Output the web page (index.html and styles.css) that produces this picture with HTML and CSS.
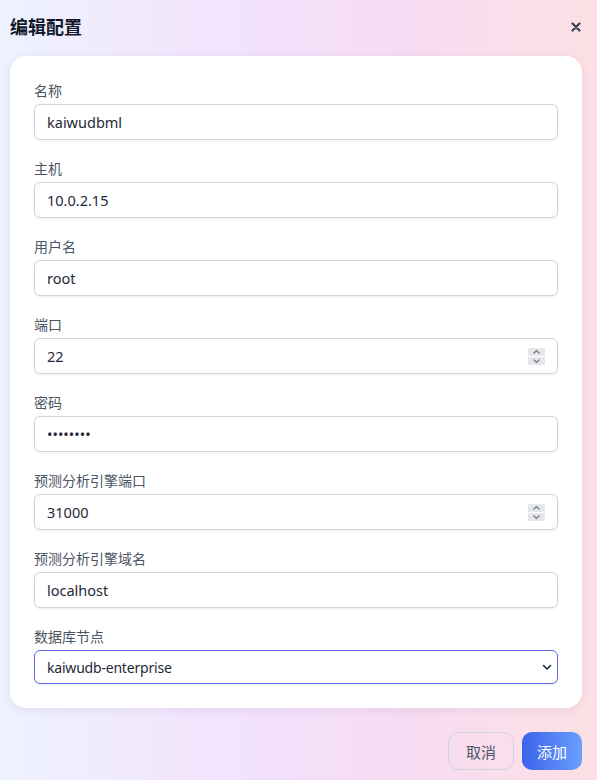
FILE: index.html
```html
<!DOCTYPE html>
<html lang="zh-CN">
<head>
<meta charset="utf-8">
<title>编辑配置</title>
<link rel="stylesheet" href="styles.css">
</head>
<body>
<div class="dialog">
  <div class="header">
    <h1 class="title">编辑配置</h1>
    <button class="close" aria-label="关闭">
      <svg width="10" height="10" viewBox="0 0 10 10"><path d="M1.5 1.5 L8.5 8.5 M8.5 1.5 L1.5 8.5" stroke="#374151" stroke-width="2.2" stroke-linecap="round"/></svg>
    </button>
  </div>
  <form class="card">
    <div class="field">
      <label class="label">名称</label>
      <input class="input" type="text" value="kaiwudbml">
    </div>
    <div class="field">
      <label class="label">主机</label>
      <input class="input" type="text" value="10.0.2.15">
    </div>
    <div class="field">
      <label class="label">用户名</label>
      <input class="input" type="text" value="root">
    </div>
    <div class="field">
      <label class="label">端口</label>
      <div class="num-wrap">
        <input class="input" type="text" value="22">
        <span class="spin">
          <span class="spin-btn"><svg width="9" height="6" viewBox="0 0 9 6"><path d="M1.5 4.5 L4.5 1.5 L7.5 4.5" fill="none" stroke="#6b7280" stroke-width="1.1"/></svg></span>
          <span class="spin-btn"><svg width="9" height="6" viewBox="0 0 9 6"><path d="M1.5 1.5 L4.5 4.5 L7.5 1.5" fill="none" stroke="#6b7280" stroke-width="1.1"/></svg></span>
        </span>
      </div>
    </div>
    <div class="field">
      <label class="label">密码</label>
      <input class="input" type="password" value="kaiwudb1">
    </div>
    <div class="field">
      <label class="label">预测分析引擎端口</label>
      <div class="num-wrap">
        <input class="input" type="text" value="31000">
        <span class="spin">
          <span class="spin-btn"><svg width="9" height="6" viewBox="0 0 9 6"><path d="M1.5 4.5 L4.5 1.5 L7.5 4.5" fill="none" stroke="#6b7280" stroke-width="1.1"/></svg></span>
          <span class="spin-btn"><svg width="9" height="6" viewBox="0 0 9 6"><path d="M1.5 1.5 L4.5 4.5 L7.5 1.5" fill="none" stroke="#6b7280" stroke-width="1.1"/></svg></span>
        </span>
      </div>
    </div>
    <div class="field">
      <label class="label">预测分析引擎域名</label>
      <input class="input" type="text" value="localhost">
    </div>
    <div class="field">
      <label class="label">数据库节点</label>
      <div class="select-wrap">
        <select class="select">
          <option>kaiwudb-enterprise</option>
        </select>
        <svg class="chev" width="10" height="7" viewBox="0 0 10 7"><path d="M1.5 1.5 L5 5 L8.5 1.5" fill="none" stroke="#1f2937" stroke-width="1.6" stroke-linecap="round" stroke-linejoin="round"/></svg>
      </div>
    </div>
  </form>
  <div class="footer">
    <button class="btn btn-cancel" type="button">取消</button>
    <button class="btn btn-primary" type="button">添加</button>
  </div>
</div>
</body>
</html>
```
FILE: styles.css
```css
* { box-sizing: border-box; }
html, body { margin: 0; height: 100%; }
body {
  font-family: "Noto Sans", "Noto Sans CJK SC", sans-serif;
  background: linear-gradient(90deg, #eef2ff 0%, #f3e0fb 45%, #f7dcf2 70%, #fde0e4 100%);
  color: #1f2937;
}
.dialog {
  padding: 0 15px 0 10px;
}
.header {
  height: 52px;
  display: flex;
  align-items: center;
  justify-content: space-between;
}
.title {
  margin: 0;
  font-size: 18px;
  font-weight: 700;
  line-height: 26px;
  color: #111827;
  font-family: "Noto Sans CJK SC", sans-serif;
}
.close {
  border: 0;
  background: transparent;
  padding: 0;
  width: 12px;
  height: 12px;
  display: flex;
  align-items: center;
  justify-content: center;
  margin-top: 2px;
}
.card {
  margin: 4px 0 0;
  background: #fff;
  border-radius: 16px;
  padding: 24px 24px 24px 24px;
  box-shadow: 0 2px 8px rgba(120, 100, 140, 0.12);
  display: flex;
  flex-direction: column;
  gap: 18px;
}
.field {
  display: flex;
  flex-direction: column;
  gap: 4px;
}
.label {
  font-family: "Noto Sans CJK SC", sans-serif;
  font-size: 14px;
  line-height: 20px;
  color: #4b5563;
}
.input, .select {
  width: 100%;
  height: 36px;
  border: 1px solid #d1d5db;
  border-radius: 6px;
  padding: 0 12px;
  font-family: "Noto Sans", "Noto Sans CJK SC", sans-serif;
  font-size: 14.5px;
  color: #1f2937;
  background: #fff;
  box-shadow: 0 1px 2px rgba(0, 0, 0, 0.08);
  outline: none;
}
.num-wrap, .select-wrap { position: relative; }
.spin {
  position: absolute;
  right: 13px;
  top: 10px;
  width: 17px;
  display: flex;
  flex-direction: column;
  gap: 1px;
}
.spin-btn {
  height: 8px;
  background: #e5e7eb;
  display: flex;
  align-items: center;
  justify-content: center;
}
.select {
  height: 34px;
  appearance: none;
  -webkit-appearance: none;
  border-color: #6366f1;
  font-size: 14px;
  letter-spacing: -0.2px;
}
.chev {
  position: absolute;
  right: 6px;
  top: 14px;
}
.footer {
  display: flex;
  justify-content: flex-end;
  gap: 8px;
  margin-top: 24px;
}
.btn {
  height: 38px;
  border-radius: 10px;
  padding: 0 17px;
  font-family: "Noto Sans CJK SC", sans-serif;
  font-size: 15px;
  cursor: pointer;
}
.btn-cancel {
  background: transparent;
  border: 1px solid #d1d5db;
  color: #4b5563;
}
.btn-primary {
  border: 0;
  padding: 0 15px;
  color: #fff;
  background: linear-gradient(90deg, #3b63ea 0%, #6a9fff 100%);
}
```
